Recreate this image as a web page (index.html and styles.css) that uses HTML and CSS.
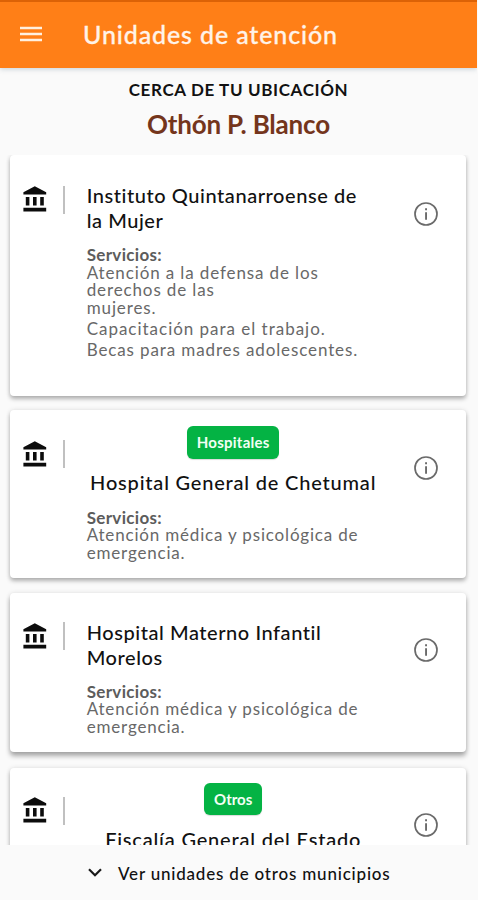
FILE: index.html
```html
<!DOCTYPE html>
<html lang="es">
<head>
<meta charset="utf-8">
<title>Unidades de atención</title>
<link rel="stylesheet" href="styles.css">
</head>
<body>
<svg width="0" height="0" class="defs" aria-hidden="true">
  <symbol id="bank" viewBox="0 0 24 24"><path d="M4 10v7h3v-7H4zm6 0v7h3v-7h-3zM2 22h19v-3H2v3zm14-12v7h3v-7h-3zm-4.500-9L2 6v2h19V6l-9.500-5z"/></symbol>
  <symbol id="info" viewBox="0 0 24 24"><circle cx="12" cy="12" r="11" fill="none" stroke="#6a6a6a" stroke-width="1.700"/><path fill="#6a6a6a" d="M11.100 6.200h1.900v2h-1.900zM11.100 10.200h1.900v7.600h-1.900z"/></symbol>
</svg>
<div class="app">
  <header class="bar">
    <svg class="menu" viewBox="0 0 22 16"><path d="M0 2h22M0 8h22M0 14h22" stroke="#fff0e0" stroke-width="2.700"/></svg>
    <h1>Unidades de atención</h1>
  </header>
  <div class="place">
    <div class="near">CERCA DE TU UBICACIÓN</div>
    <div class="town">Othón P. Blanco</div>
  </div>
  <main class="list">
    <article class="card first">
      <svg class="bank"><use href="#bank"/></svg>
      <i class="rule"></i>
      <div class="copy">
        <h2>Instituto Quintanarroense de<br>la Mujer</h2>
        <h3>Servicios:</h3>
        <p>Atención a la defensa de los<br>derechos de las<br>mujeres.</p>
        <p class="item loose">Capacitación para el trabajo.</p>
        <p class="item">Becas para madres adolescentes.</p>
      </div>
      <svg class="info"><use href="#info"/></svg>
    </article>
    <article class="card second">
      <svg class="bank"><use href="#bank"/></svg>
      <i class="rule"></i>
      <div class="copy tagged">
        <span class="tag">Hospitales</span>
        <h2 class="wide">Hospital General de Chetumal</h2>
        <h3>Servicios:</h3>
        <p class="snug">Atención médica y psicológica de<br>emergencia.</p>
      </div>
      <svg class="info"><use href="#info"/></svg>
    </article>
    <article class="card third">
      <svg class="bank"><use href="#bank"/></svg>
      <i class="rule"></i>
      <div class="copy">
        <h2>Hospital Materno Infantil<br>Morelos</h2>
        <h3>Servicios:</h3>
        <p class="snug">Atención médica y psicológica de<br>emergencia.</p>
      </div>
      <svg class="info"><use href="#info"/></svg>
    </article>
    <article class="card fourth">
      <svg class="bank"><use href="#bank"/></svg>
      <i class="rule"></i>
      <div class="copy tagged">
        <span class="tag short">Otros</span>
        <h2 class="wide">Fiscalía General del Estado</h2>
      </div>
      <svg class="info"><use href="#info"/></svg>
    </article>
  </main>
  <footer class="more">
    <svg class="chevron" viewBox="0 0 14 9"><path d="M1 1.200l6 6 6-6" fill="none" stroke="#1a1a1a" stroke-width="2.200"/></svg>
    <span>Ver unidades de otros municipios</span>
  </footer>
</div>
</body>
</html>
```
FILE: styles.css
```css
* { box-sizing: border-box; margin: 0; }
body { background: #fafafa; font-family: Lato, "Liberation Sans", sans-serif; color: #111; }
.defs { display: block; height: 0; }
.app { height: 900px; width: 477px; display: flex; flex-direction: column; overflow: hidden; }
.bar { flex: none; height: 67.500px; display: flex; align-items: center; padding: 0 0 1px 20px; gap: 41px; background: #ff7f17; border-top: 2px solid #dc6206; box-shadow: 0 1px 5px rgba(80, 110, 130, .3); color: #fff3e8; }
.menu { width: 22px; height: 16px; }
h1 { font-size: 25px; font-weight: 500; line-height: 30px; letter-spacing: .87px; -webkit-text-stroke: .3px #fff3e8; }
.place { flex: none; height: 87.500px; padding-top: 10px; text-align: center; white-space: nowrap; }
.near { font-size: 17px; font-weight: 700; line-height: 24px; letter-spacing: .63px; }
.town { margin-top: 7px; font-size: 26px; font-weight: 700; line-height: 30px; letter-spacing: -.2px; color: #74351c; }
.list { flex: 1; min-height: 0; overflow: hidden; padding: 0 11px 0 10px; }
.card { display: flex; align-items: flex-start; padding-left: 11px; background: #fff; border-radius: 4px; box-shadow: 0 3px 4px rgba(0, 0, 0, .27), 0 0 5px rgba(0, 0, 0, .1); }
.first { height: 241px; padding-top: 28px; }
.second { height: 168px; margin-top: 14px; padding-top: 27.500px; }
.third { height: 159px; margin-top: 15px; padding-top: 26.500px; box-shadow: 0 4px 5px rgba(0, 0, 0, .32), 0 0 5px rgba(0, 0, 0, .1); }
.fourth { height: 168px; margin-top: 16px; padding-top: 26px; }
.bank { flex: none; width: 28.800px; height: 28.800px; margin-top: 2px; fill: #0c0c0c; }
.rule { flex: none; width: 2px; height: 28px; margin: 2.500px 21.200px 0 13.700px; background: #c0c0c0; }
.copy { flex: none; width: 293px; white-space: nowrap; }
.tagged { display: flex; flex-direction: column; margin-top: -11.500px; }
.tag { align-self: center; height: 32.500px; padding: 0 9.500px; margin-bottom: 11.500px; background: #04b344; border-radius: 6px; box-shadow: 0 1px 1px rgba(0, 0, 0, .15); color: #f2fff5; font-size: 15px; font-weight: 700; line-height: 32px; letter-spacing: .25px; }
.tag.short { letter-spacing: 0; padding: 0 10px; }
h2 { font-size: 20px; font-weight: 500; line-height: 25px; letter-spacing: .56px; }
h2.wide { letter-spacing: .8px; text-align: center; }
h3 { margin-top: 13px; font-size: 17px; font-weight: 700; line-height: 17.500px; letter-spacing: .32px; color: #5c5c5c; }
.tagged h3 { margin-top: 13.500px; }
p { font-size: 17px; line-height: 17.500px; letter-spacing: .88px; color: #686868; }
p.loose { letter-spacing: .98px; }
p.snug { letter-spacing: .82px; }
.item { margin-top: 3.500px; }
.info { flex: none; width: 24px; height: 24px; margin: 18.500px 0 0 34.500px; }
.more { flex: none; height: 55.500px; display: flex; align-items: center; padding: 3px 0 0 88px; gap: 16px; background: #fafafa; font-size: 17px; font-weight: 500; letter-spacing: .8px; white-space: nowrap; }
.chevron { width: 14px; height: 9px; margin-top: -3px; }
```
